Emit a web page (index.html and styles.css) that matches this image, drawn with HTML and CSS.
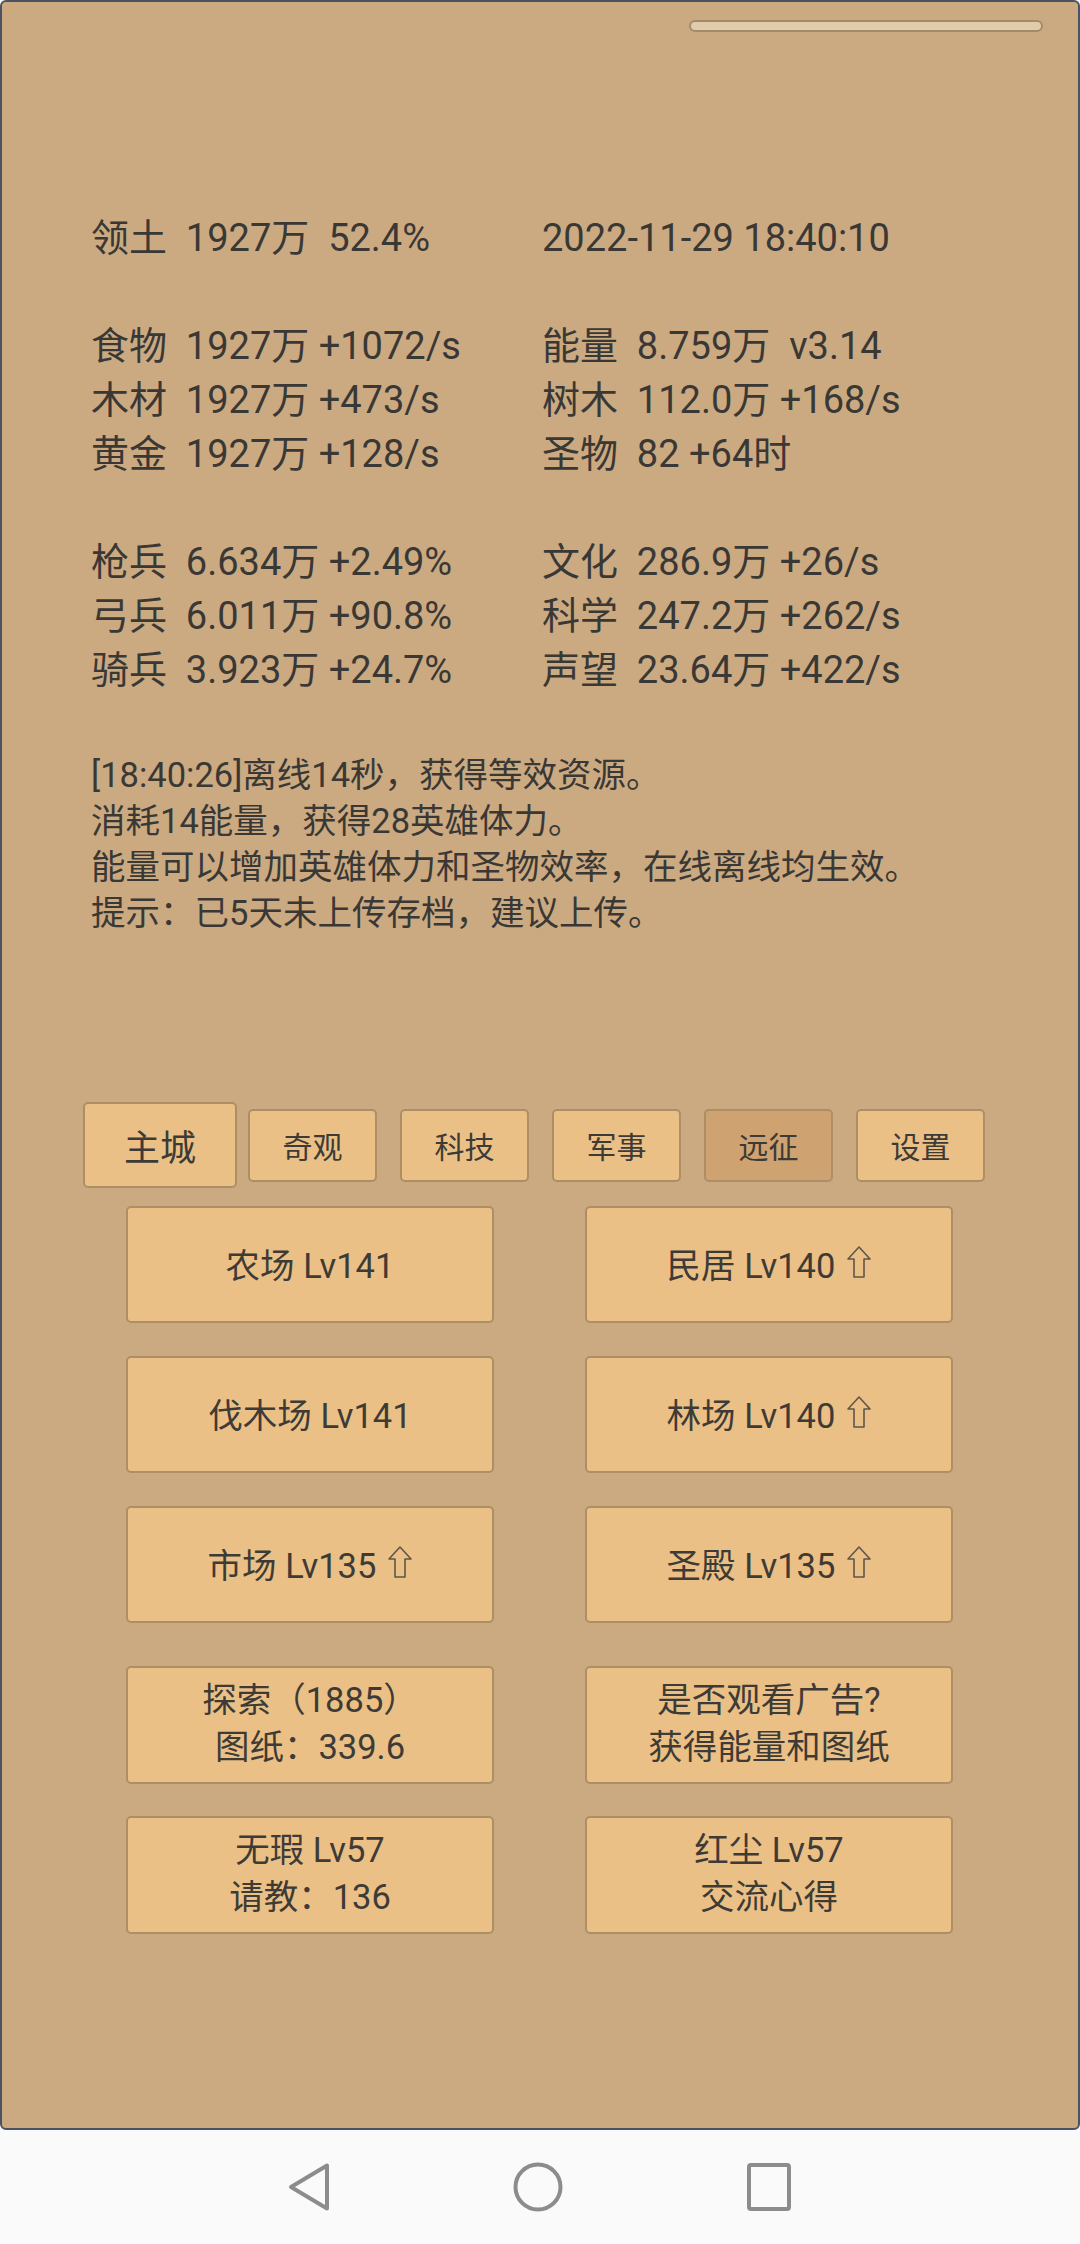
FILE: index.html
```html
<!DOCTYPE html>
<html lang="zh-CN">
<head>
<meta charset="utf-8">
<title>主城</title>
<link rel="stylesheet" href="styles.css">
</head>
<body>
<div class="app">
  <div class="topbar"><div class="progress"></div></div>

  <div class="stats">
    <div class="group">
      <div class="line">领土  1927万  52.4%</div>
      <div class="line">2022-11-29 18:40:10</div>
    </div>
    <div class="group">
      <div class="line">食物  1927万 +1072/s</div>
      <div class="line">能量  8.759万  v3.14</div>
      <div class="line">木材  1927万 +473/s</div>
      <div class="line">树木  112.0万 +168/s</div>
      <div class="line">黄金  1927万 +128/s</div>
      <div class="line">圣物  82 +64时</div>
    </div>
    <div class="group">
      <div class="line">枪兵  6.634万 +2.49%</div>
      <div class="line">文化  286.9万 +26/s</div>
      <div class="line">弓兵  6.011万 +90.8%</div>
      <div class="line">科学  247.2万 +262/s</div>
      <div class="line">骑兵  3.923万 +24.7%</div>
      <div class="line">声望  23.64万 +422/s</div>
    </div>
  </div>

  <div class="log">
    <div>[18:40:26]离线14秒，获得等效资源。</div>
    <div>消耗14能量，获得28英雄体力。</div>
    <div>能量可以增加英雄体力和圣物效率，在线离线均生效。</div>
    <div>提示：已5天未上传存档，建议上传。</div>
  </div>

  <div class="tabs">
    <div class="tab tab-main">主城</div>
    <div class="tab">奇观</div>
    <div class="tab">科技</div>
    <div class="tab">军事</div>
    <div class="tab tab-pressed">远征</div>
    <div class="tab">设置</div>
  </div>

  <div class="grid grid-a">
    <div class="btn">农场 Lv141</div>
    <div class="btn">民居 Lv140<svg class="up" viewBox="0 0 24 32"><path d="M12 1 L23 13 H17 V31 H7 V13 H1 Z"/></svg></div>
    <div class="btn">伐木场 Lv141</div>
    <div class="btn">林场 Lv140<svg class="up" viewBox="0 0 24 32"><path d="M12 1 L23 13 H17 V31 H7 V13 H1 Z"/></svg></div>
    <div class="btn">市场 Lv135<svg class="up" viewBox="0 0 24 32"><path d="M12 1 L23 13 H17 V31 H7 V13 H1 Z"/></svg></div>
    <div class="btn">圣殿 Lv135<svg class="up" viewBox="0 0 24 32"><path d="M12 1 L23 13 H17 V31 H7 V13 H1 Z"/></svg></div>
  </div>

  <div class="grid grid-b">
    <div class="btn btn-two"><span>探索（1885）</span><span>图纸：339.6</span></div>
    <div class="btn btn-two"><span>是否观看广告?</span><span>获得能量和图纸</span></div>
    <div class="btn btn-two"><span>无瑕 Lv57</span><span>请教：136</span></div>
    <div class="btn btn-two"><span>红尘 Lv57</span><span>交流心得</span></div>
  </div>
</div>

<div class="navbar">
  <div class="navicon">
    <svg viewBox="0 0 50 50"><path d="M45 3.5 V46.5 L9 25 Z" class="nav-stroke"/></svg>
  </div>
  <div class="navicon">
    <svg viewBox="0 0 50 50"><circle cx="25" cy="25" r="22.5" class="nav-stroke"/></svg>
  </div>
  <div class="navicon">
    <svg viewBox="0 0 50 50"><rect x="5" y="3" width="40" height="44" rx="2" class="nav-stroke"/></svg>
  </div>
</div>
</body>
</html>
```

FILE: styles.css
```css
* { box-sizing: border-box; }

html, body {
  margin: 0;
  padding: 0;
}

body {
  width: 1080px;
  height: 2244px;
  background: #fafafa;
  font-family: "Roboto", "Noto Sans CJK SC", sans-serif;
  color: #3a3835;
  overflow: hidden;
}

.app {
  height: 2130px;
  background: #cbaa82;
  border: 2px solid #4b5261;
  border-radius: 6px;
  display: flex;
  flex-direction: column;
}

.topbar {
  display: flex;
  justify-content: flex-end;
  padding-right: 35px;
  margin-top: 18px;
}

.progress {
  width: 354px;
  height: 12px;
  border-radius: 6px;
  background: #e0cbac;
  border: 2px solid #a48b68;
}

.stats {
  margin-top: 179px;
  padding-left: 89px;
  display: flex;
  flex-direction: column;
  gap: 54px;
}

.group {
  display: grid;
  grid-template-columns: 451px 1fr;
}

.line {
  font-size: 38px;
  line-height: 54px;
  height: 54px;
  white-space: pre;
}

.log {
  margin-top: 55px;
  padding-left: 89px;
  font-size: 34.5px;
  line-height: 46px;
}

.tabs {
  margin-top: 166px;
  padding-left: 81px;
  display: flex;
  align-items: center;
  gap: 23px;
}

.tab {
  width: 129px;
  height: 73px;
  background: #ebc086;
  border: 2px solid #ad8f66;
  border-radius: 5px;
  display: flex;
  align-items: center;
  justify-content: center;
  font-size: 30px;
  color: #3e3b36;
}

.tab-main {
  width: 154px;
  height: 86px;
  font-size: 36px;
  margin-right: -12px;
}

.tab-pressed {
  background: #cfa271;
}

.grid {
  display: grid;
  grid-template-columns: 368px 368px;
  column-gap: 91px;
  padding-left: 124px;
}

.grid-a {
  margin-top: 18px;
  grid-auto-rows: 117px;
  row-gap: 33px;
}

.grid-b {
  margin-top: 43px;
  grid-auto-rows: 118px;
  row-gap: 32px;
}

.btn {
  background: #ebc086;
  border: 2px solid #ad8f66;
  border-radius: 5px;
  display: flex;
  align-items: center;
  justify-content: center;
  font-size: 34.5px;
  color: #3e3b36;
  white-space: pre;
  padding-bottom: 4px;
}

.btn-two {
  flex-direction: column;
  line-height: 47px;
  padding-bottom: 2px;
}

.up {
  width: 24px;
  height: 32px;
  margin-left: 12px;
  margin-top: -2px;
}

.up path {
  fill: none;
  stroke: #5f564a;
  stroke-width: 1.6;
  stroke-linejoin: round;
}

.navbar {
  height: 114px;
  display: flex;
  align-items: center;
  padding-left: 282px;
  gap: 181px;
}

.navicon {
  width: 50px;
  height: 50px;
}

.navicon svg {
  width: 50px;
  height: 50px;
  display: block;
}

.nav-stroke {
  fill: none;
  stroke: #8c8c8c;
  stroke-width: 4;
  stroke-linejoin: round;
}
```
